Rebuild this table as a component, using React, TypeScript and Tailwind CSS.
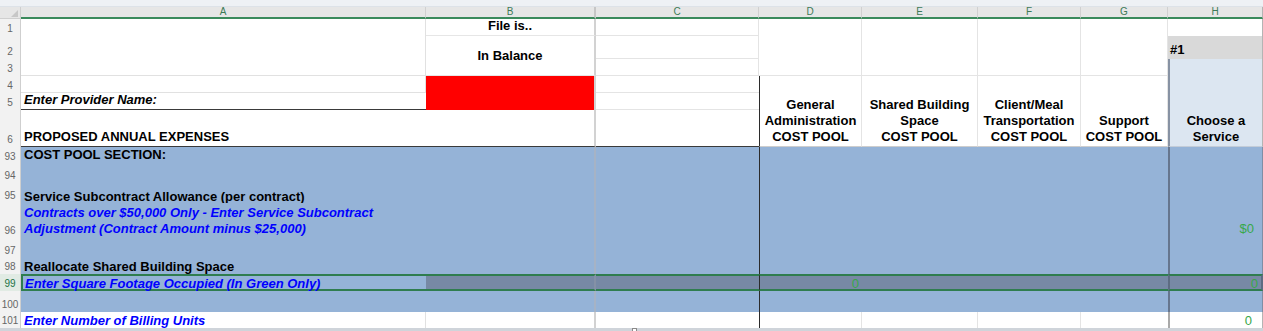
import React from 'react';

const letters = [
  { l: 'A', at: 'col-start-2', extra: 'border-r-[#d0d0d0]' },
  { l: 'B', at: 'col-start-3', extra: 'border-r-2 border-r-[#c6c6c6]' },
  { l: 'C', at: 'col-start-4', extra: 'border-r-[#d0d0d0]' },
  { l: 'D', at: 'col-start-5', extra: 'border-r-[#d0d0d0]' },
  { l: 'E', at: 'col-start-6', extra: 'border-r-[#d0d0d0]' },
  { l: 'F', at: 'col-start-7', extra: 'border-r-[#d0d0d0]' },
  { l: 'G', at: 'col-start-8', extra: 'border-r-[#d0d0d0]' },
  { l: 'H', at: 'col-start-9', extra: 'border-r-[#b4b4b4]' },
];

const rowNums = [
  { n: '1', at: 'row-start-3' },
  { n: '2', at: 'row-start-4' },
  { n: '3', at: 'row-start-5' },
  { n: '4', at: 'row-start-6' },
  { n: '5', at: 'row-start-7' },
  { n: '6', at: 'row-start-8' },
  { n: '93', at: 'row-start-9' },
  { n: '94', at: 'row-start-10' },
  { n: '95', at: 'row-start-11' },
  { n: '96', at: 'row-start-12' },
  { n: '97', at: 'row-start-13' },
  { n: '98', at: 'row-start-14' },
  { n: '99', at: 'row-start-15' },
  { n: '100', at: 'row-start-16' },
  { n: '101', at: 'row-start-17' },
];

// shared cell bits
const cell = 'flex min-w-0 overflow-hidden whitespace-nowrap';
const bottomText = 'items-end px-[3px] pb-[1px] leading-[16px]';
const lowText = 'items-end px-[3px] leading-[14px]';
const blue = 'bg-[#95b3d7]';
const shade = 'bg-[#7789a5]';
const sel = 'border-y-2 border-y-[#2f7d4f]';
const selText = 'flex min-w-0 items-center whitespace-nowrap pt-[2px] leading-[14px]';
const inputText = 'font-bold italic text-[#0000ff]';
const num = 'justify-end text-[#38a84a]';

export default function App() {
  return (
    <div className="grid h-[331px] w-[1263px] grid-cols-[21px_405px_170px_163px_103px_116px_103px_87px_95px] grid-rows-[7px_12px_17px_23px_17px_17px_17px_37px_17px_19px_20px_35px_20px_16px_17px_21px_16px_3px] overflow-hidden bg-white font-['Liberation_Sans',Arial,sans-serif] text-[13px] text-black">
      {/* strip above the headings */}
      <div className="col-span-9 col-start-1 row-start-1 border-b border-[#dde2e8] bg-[#eef1f5]" />

      {/* column headings */}
      <div className="relative col-start-1 row-start-2 border-r border-b border-[#cfcfcf] bg-[#e6e6e6]">
        <div className="absolute right-[2px] bottom-[1px] h-0 w-0 border-b-[7px] border-l-[7px] border-b-[#c7c7c7] border-l-transparent" />
      </div>
      {letters.map((c) => (
        <div
          key={c.l}
          className={`${c.at} row-start-2 flex items-center justify-center border-r border-b-2 border-b-[#3b8a5c] bg-[#e6e6e6] text-[10px] leading-none text-[#3d7a57] ${c.extra}`}
        >
          {c.l}
        </div>
      ))}

      {/* row headings */}
      {rowNums.map((r) => (
        <div
          key={r.n}
          className={`col-start-1 ${r.at} flex items-end justify-center border-r border-[#cfcfcf] pb-[1px] text-[10px] leading-[12px] ${
            r.n === '99' ? 'bg-[#e1ebe4] text-[#217346]' : 'bg-[#f2f2f2] text-[#666666]'
          }`}
        >
          {r.n}
        </div>
      ))}

      {/* column A */}
      <div className="col-start-2 row-span-3 row-start-3 border-r border-b border-[#e1e1e1]" />
      <div className="col-start-2 row-start-6 border-r border-b border-[#e1e1e1]" />
      <div className={`col-start-2 row-start-7 ${cell} ${bottomText} border-b border-[#3a3a3a] font-bold italic`}>
        Enter Provider Name:
      </div>
      <div className={`col-start-2 row-start-8 ${cell} ${bottomText} border-b border-[#3a3a3a] font-bold`}>
        PROPOSED ANNUAL EXPENSES
      </div>
      <div className={`col-start-2 row-start-9 ${cell} ${bottomText} ${blue} font-bold`}>COST POOL SECTION:</div>
      <div className={`col-start-2 row-start-10 ${blue}`} />
      <div className={`col-start-2 row-start-11 ${cell} items-end px-[3px] leading-[12px] ${blue} font-bold`}>
        Service Subcontract Allowance (per contract)
      </div>
      <div className={`col-start-2 row-start-12 flex min-w-0 flex-col items-start justify-end overflow-hidden px-[3px] pb-[1px] leading-[16px] whitespace-nowrap ${blue} ${inputText}`}>
        <span>Contracts over $50,000 Only - Enter Service Subcontract</span>
        <span>Adjustment (Contract Amount minus $25,000)</span>
      </div>
      <div className={`col-start-2 row-start-13 ${blue}`} />
      <div className={`col-start-2 row-start-14 ${cell} ${lowText} ${blue} font-bold`}>
        Reallocate Shared Building Space
      </div>
      <div className={`col-start-2 row-start-15 ${selText} px-[2px] ${blue} ${sel} border-l-2 border-l-[#2f7d4f] ${inputText}`}>
        Enter Square Footage Occupied (In Green Only)
      </div>
      <div className={`col-start-2 row-start-16 ${blue}`} />
      <div className={`col-start-2 row-start-17 ${cell} ${lowText} border-r border-[#e1e1e1] ${inputText}`}>
        Enter Number of Billing Units
      </div>

      {/* column B */}
      <div className={`col-start-3 row-start-3 ${cell} ${bottomText} justify-center border-r-2 border-b border-r-[#d2d2d2] border-b-[#e6e6e6] font-bold`}>
        File is..
      </div>
      <div className={`col-start-3 row-span-2 row-start-4 ${cell} items-center justify-center border-r-2 border-b border-r-[#d2d2d2] border-b-[#e6e6e6] font-bold`}>
        In Balance
      </div>
      <div className="col-start-3 row-span-2 row-start-6 border-r-2 border-r-[#d2d2d2] bg-[#ff0000]" />
      <div className="col-start-3 row-start-8 border-r-2 border-b border-r-[#d2d2d2] border-b-[#3a3a3a]" />
      <div className={`col-start-3 row-span-6 row-start-9 border-r-2 border-r-[#a6b3c5] ${blue}`} />
      <div className={`col-start-3 row-start-15 border-r-2 border-r-[#8491a6] ${shade} ${sel}`} />
      <div className={`col-start-3 row-start-16 border-r-2 border-r-[#a6b3c5] ${blue}`} />
      <div className="col-start-3 row-start-17 border-r-2 border-r-[#d2d2d2]" />

      {/* column C */}
      <div className="col-start-4 row-start-3 border-r border-b border-[#e4e4e4]" />
      <div className="col-start-4 row-start-4 border-r border-b border-[#e4e4e4]" />
      <div className="col-start-4 row-start-5 border-r border-b border-[#e4e4e4]" />
      <div className="col-start-4 row-start-6 border-b border-[#e4e4e4]" />
      <div className="col-start-4 row-start-7 border-b border-[#e4e4e4]" />
      <div className="col-start-4 row-start-8 border-b border-[#3a3a3a]" />
      <div className={`col-start-4 row-span-6 row-start-9 ${blue}`} />
      <div className={`col-start-4 row-start-15 ${shade} ${sel}`} />
      <div className={`col-start-4 row-start-16 ${blue}`} />
      <div className="col-start-4 row-start-17" />

      {/* columns D to G, top block */}
      <div className="col-start-5 row-span-3 row-start-3 border-r border-b border-[#e4e4e4]" />
      <div className="col-start-6 row-span-3 row-start-3 border-r border-b border-[#e4e4e4]" />
      <div className="col-start-7 row-span-3 row-start-3 border-r border-b border-[#e4e4e4]" />
      <div className="col-start-8 row-span-3 row-start-3 border-r border-b border-[#e4e4e4]" />

      {/* cost pool headings */}
      <div className="col-start-5 row-span-3 row-start-6 flex flex-col items-center justify-end border-x border-b border-l-[#2b2b2b] border-r-[#e4e4e4] border-b-[#cdcdcd] pb-[1px] leading-[16px] font-bold whitespace-nowrap">
        <span>General</span>
        <span>Administration</span>
        <span>COST POOL</span>
      </div>
      <div className="col-start-6 row-span-3 row-start-6 flex flex-col items-center justify-end border-r border-b border-r-[#e4e4e4] border-b-[#cdcdcd] pb-[1px] leading-[16px] font-bold whitespace-nowrap">
        <span>Shared Building</span>
        <span>Space</span>
        <span>COST POOL</span>
      </div>
      <div className="col-start-7 row-span-3 row-start-6 flex flex-col items-center justify-end border-r border-b border-r-[#e4e4e4] border-b-[#cdcdcd] pb-[1px] leading-[16px] font-bold whitespace-nowrap">
        <span>Client/Meal</span>
        <span>Transportation</span>
        <span>COST POOL</span>
      </div>
      <div className="col-start-8 row-span-3 row-start-6 flex flex-col items-center justify-end border-r border-b border-r-[#e4e4e4] border-b-[#cdcdcd] pb-[1px] leading-[16px] font-bold whitespace-nowrap">
        <span>Support</span>
        <span>COST POOL</span>
      </div>

      {/* columns D to G, cost pool rows */}
      <div className={`col-start-5 row-span-6 row-start-9 border-l border-l-[#2b2b2b] ${blue}`} />
      <div className={`col-start-6 row-span-6 row-start-9 ${blue}`} />
      <div className={`col-start-7 row-span-6 row-start-9 ${blue}`} />
      <div className={`col-start-8 row-span-6 row-start-9 ${blue}`} />

      <div className={`col-start-5 row-start-15 ${selText} px-[3px] border-l border-l-[#2b2b2b] ${shade} ${sel} ${num}`}>0</div>
      <div className={`col-start-6 row-start-15 ${shade} ${sel}`} />
      <div className={`col-start-7 row-start-15 ${shade} ${sel}`} />
      <div className={`col-start-8 row-start-15 ${shade} ${sel}`} />

      <div className={`col-start-5 row-start-16 border-l border-l-[#2b2b2b] ${blue}`} />
      <div className={`col-start-6 row-start-16 ${blue}`} />
      <div className={`col-start-7 row-start-16 ${blue}`} />
      <div className={`col-start-8 row-start-16 ${blue}`} />

      <div className="col-start-5 row-start-17 border-x border-l-[#2b2b2b] border-r-[#e4e4e4]" />
      <div className="col-start-6 row-start-17 border-r border-[#e4e4e4]" />
      <div className="col-start-7 row-start-17 border-r border-[#e4e4e4]" />
      <div className="col-start-8 row-start-17" />

      {/* column H */}
      <div className="col-start-9 row-start-3 border-r border-[#b4b4b4]" />
      <div className={`col-start-9 row-start-4 ${cell} items-end border-r border-[#b4b4b4] bg-[#d9d9d9] px-[2px] pb-[1px] leading-[16px] font-bold`}>
        #1
      </div>
      <div className="col-start-9 row-span-4 row-start-5 flex flex-col items-center justify-end border-l-2 border-r border-b border-l-[#8792a3] border-r-[#b4b4b4] border-b-[#c3ccd8] bg-[#dce6f1] pb-[1px] leading-[16px] font-bold whitespace-nowrap">
        <span>Choose a</span>
        <span>Service</span>
      </div>
      <div className={`col-start-9 row-span-3 row-start-9 border-l-2 border-r border-l-[#66768e] border-r-[#7f8ea5] ${blue}`} />
      <div className={`col-start-9 row-start-12 ${cell} ${bottomText} pr-[8px] border-l-2 border-r border-l-[#66768e] border-r-[#7f8ea5] ${blue} ${num}`}>
        $0
      </div>
      <div className={`col-start-9 row-span-2 row-start-13 border-l-2 border-r border-l-[#66768e] border-r-[#7f8ea5] ${blue}`} />
      <div className={`col-start-9 row-start-15 ${selText} px-[3px] border-l-2 border-r-2 border-l-[#5d6c82] border-r-[#5d6c82] ${shade} ${sel} ${num}`}>
        0
      </div>
      <div className={`col-start-9 row-start-16 border-l-2 border-r border-l-[#66768e] border-r-[#7f8ea5] ${blue}`} />
      <div className={`col-start-9 row-start-17 ${cell} ${lowText} pr-[10px] border-l-2 border-r border-l-[#a9a9a9] border-r-[#b4b4b4] ${num}`}>
        0
      </div>

      {/* bottom edge with the sheet splitter handle */}
      <div className="col-span-9 col-start-1 row-start-18 flex bg-[#cfd4da]">
        <div className="ml-[632px] h-[3px] w-[5px] border-x border-t border-[#8a8a8a] bg-white" />
      </div>
    </div>
  );
}
